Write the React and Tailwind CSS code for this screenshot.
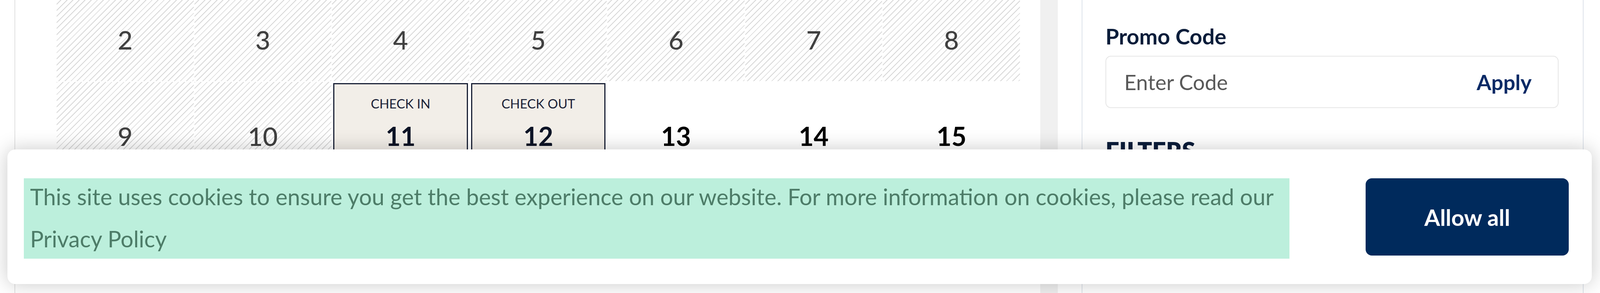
import { useState } from "react";

const hatch =
  "bg-[repeating-linear-gradient(135deg,#d8d8d8_0px,#d8d8d8_2px,#ffffff_2px,#ffffff_11px)]";

const days = [
  { n: 2, past: true },
  { n: 3, past: true },
  { n: 4, past: true },
  { n: 5, past: true },
  { n: 6, past: true },
  { n: 7, past: true },
  { n: 8, past: true },
  { n: 9, past: true },
  { n: 10, past: true },
  { n: 11, label: "CHECK IN" },
  { n: 12, label: "CHECK OUT" },
  { n: 13 },
  { n: 14 },
  { n: 15 },
];

const DayCell = ({ day }) => {
  const picked = !!day.label;
  return (
    <div className={`h-[245px] ${day.past ? hatch : "bg-white"}`}>
      <div
        className={`m-[3px] h-[239px] flex flex-col items-center pt-[30px] border-[3px]
          ${picked ? "border-[#1b2237] bg-[#f2eee8]" : "border-transparent"}`}
      >
        <span className="text-[33px] leading-[1.2] h-[40px] text-[#1b2237]">
          {day.label || ""}
        </span>
        <span
          className={`mt-[30px] text-[66px] leading-none ${
            day.past
              ? "font-medium text-[#404040]"
              : picked
              ? "font-bold text-[#0d1426]"
              : "font-bold text-black"
          }`}
        >
          {day.n}
        </span>
      </div>
    </div>
  );
};

const CookieBanner = ({ onAllow }) => (
  <div className="absolute left-[19px] right-[21px] top-[383px] h-[345px] bg-white rounded-[20px]
    shadow-[0_0_50px_rgba(0,0,0,0.22)] flex items-start pt-[74px] pl-[42px] pr-[59px]">
    <div className="flex-1 h-[206px] bg-[#bcefdc] px-[16px]">
      <p className="-mt-[7px] text-[58px] leading-[108px] text-[#4d7c68]">
        This site uses cookies to ensure you get the best experience on our website. For more
        information on cookies, please read our Privacy Policy
      </p>
    </div>
    <button
      onClick={onAllow}
      className="ml-[195px] shrink-0 w-[520px] h-[198px] rounded-[16px] bg-[#002a5c] text-white font-bold text-[58px]"
    >
      Allow all
    </button>
  </div>
);

const App = () => {
  const [showBanner, setShowBanner] = useState(true);
  const [code, setCode] = useState("");

  return (
    <div className="relative w-full h-[751px] overflow-hidden bg-white font-['Lato',sans-serif]">
      <div className="flex h-full">
        {/* calendar */}
        <div className="ml-[37px] w-[2626px] shrink-0 h-full border-l-2 border-[#e0e0e0] pl-[106px]">
          <div className="-mt-[37px] w-[2466px] grid grid-cols-7 gap-[2px] bg-white">
            {days.map((d) => (
              <DayCell key={d.n} day={d} />
            ))}
          </div>
        </div>

        {/* scrollbar track */}
        <div className="w-[45px] shrink-0 h-full bg-[#f0f0f0]" />

        {/* sidebar */}
        <div className="ml-[61px] w-[1285px] shrink-0 h-full border-x-2 border-[#dde3ea] pl-[59px] pt-[59px]">
          <h3 className="text-[56px] font-bold leading-[1.2] text-[#0b1d3a]">Promo Code</h3>
          <div className="mt-[17px] w-[1160px] h-[134px] border-2 border-[#e6e6e6] rounded-[14px] flex items-center pl-[46px] pr-[67px]">
            <input
              value={code}
              onChange={(e) => setCode(e.target.value)}
              placeholder="Enter Code"
              className="flex-1 min-w-0 text-[54px] text-[#333] placeholder:text-[#595959] outline-none bg-transparent"
            />
            <button className="text-[54px] font-bold text-[#0a2a66]">Apply</button>
          </div>
          <h2 className="mt-[72px] text-[62px] font-extrabold leading-[1.2] text-[#0b1d3a]">FILTERS</h2>
        </div>
      </div>

      {showBanner && <CookieBanner onAllow={() => setShowBanner(false)} />}
    </div>
  );
};

export default App;
